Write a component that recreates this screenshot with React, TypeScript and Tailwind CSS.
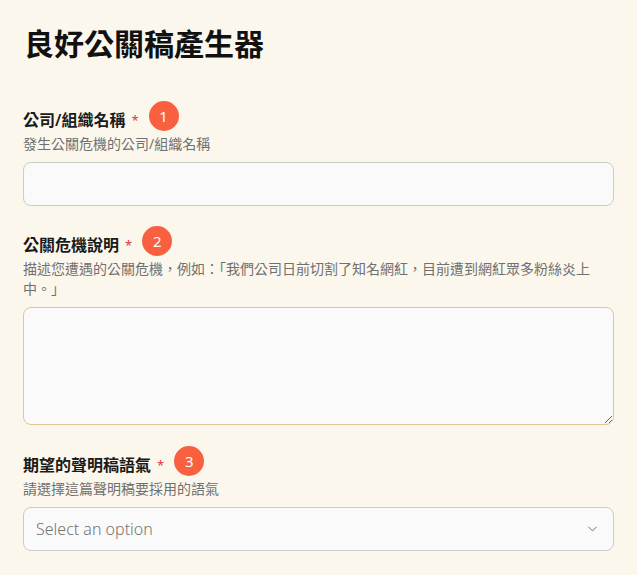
import React from 'react';
import { ChevronDown } from 'lucide-react';

const font = { fontFamily: '"Noto Sans", "Noto Sans CJK TC", sans-serif' };

const FieldLabel = ({ text, step }: { text: string; step: number }) => (
  <div className="flex items-center h-6">
    <span className="text-[16px] font-semibold text-[#1b1b1b] leading-6">{text}</span>
    <span className="ml-1.5 text-[13px] text-[#e0393e] leading-6">*</span>
    <span className="ml-[10px] -my-[3px] relative -top-1 w-[30px] h-[30px] rounded-full bg-[#f8603f] text-white text-[15px] flex items-center justify-center">
      {step}
    </span>
  </div>
);

const Helper = ({ children }: { children: React.ReactNode }) => (
  <p className="mt-0.5 text-[14px] leading-5 text-[#707070]">{children}</p>
);

export default function App() {
  return (
    <div className="min-h-[575px] bg-[#fcf7ec] px-[23px] pt-[26px]" style={font}>
      <h1 className="text-[30px] leading-9 font-bold text-[#111] pl-px">良好公關稿產生器</h1>

      <div className="mt-[46px]">
        <FieldLabel text="公司/組織名稱" step={1} />
        <Helper>發生公關危機的公司/組織名稱</Helper>
        <input
          type="text"
          className="mt-2 block w-full h-[44px] rounded-lg border border-[#cbcbcb] bg-[#fafafa] px-3 outline-none"
        />
      </div>

      <div className="mt-[27px]">
        <FieldLabel text="公關危機說明" step={2} />
        <Helper>描述您遭遇的公關危機，例如：「我們公司日前切割了知名網紅，目前遭到網紅眾多粉絲炎上中。」</Helper>
        <textarea className="mt-2 block w-full h-[118px] rounded-lg border border-[#e2c592] bg-[#fafafa] px-3 py-2 outline-none" />
      </div>

      <div className="mt-7">
        <FieldLabel text="期望的聲明稿語氣" step={3} />
        <Helper>請選擇這篇聲明稿要採用的語氣</Helper>
        <div className="relative mt-2">
          <select
            defaultValue=""
            className="block w-full h-[44px] appearance-none rounded-lg border border-[#cbcbcb] bg-[#fafafa] pl-3 pr-10 text-[16px] font-light text-[#747474] outline-none"
          >
            <option value="" disabled>
              Select an option
            </option>
          </select>
          <ChevronDown
            size={15}
            strokeWidth={1.6}
            className="absolute right-[14px] top-1/2 -translate-y-1/2 text-[#6b6b6b] pointer-events-none"
          />
        </div>
      </div>
    </div>
  );
}
